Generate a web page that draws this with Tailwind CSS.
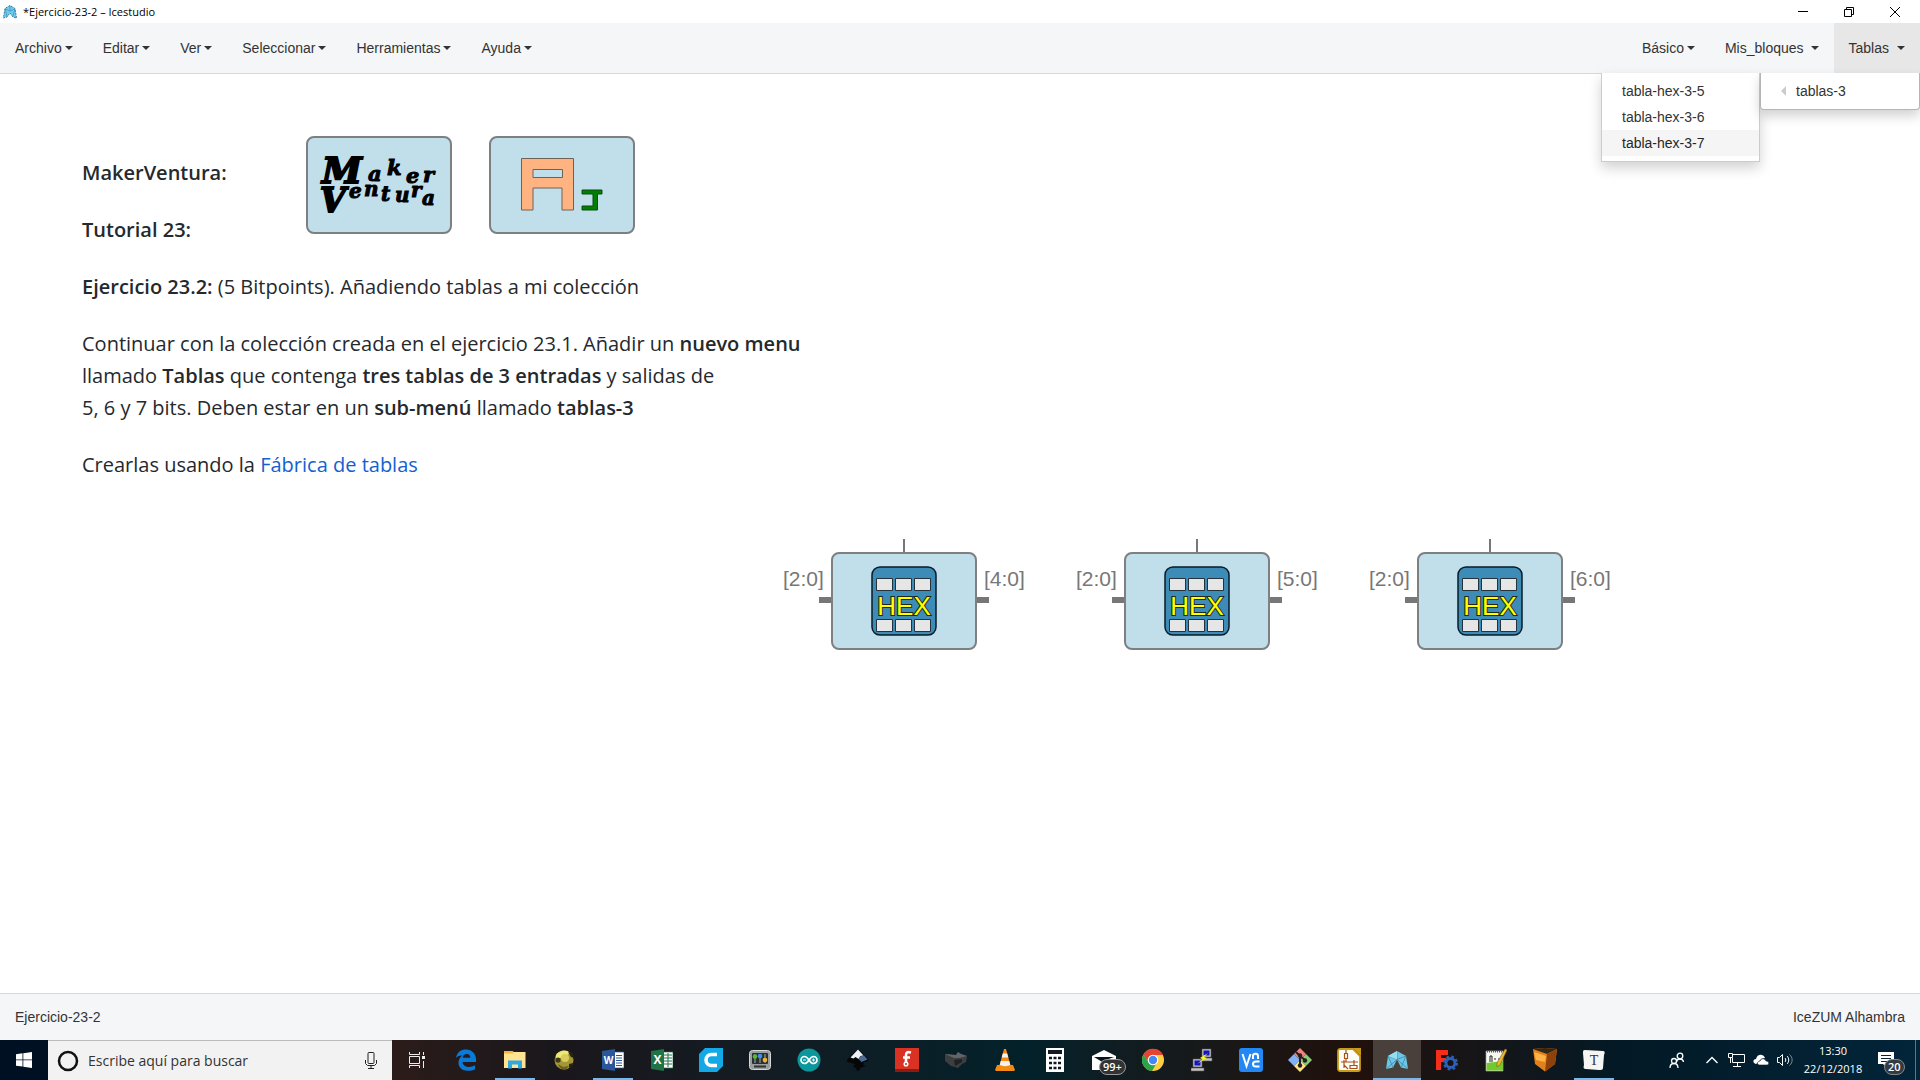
<!DOCTYPE html>
<html lang="es">
<head>
<meta charset="utf-8">
<title>*Ejercicio-23-2 – Icestudio</title>
<script src="https://cdn.jsdelivr.net/npm/@tailwindcss/browser@4"></script>
</head>
<body class="flex h-screen flex-col overflow-hidden bg-white font-['Liberation_Sans',Arial,sans-serif] text-sm text-[#333]">

<!-- Window title bar -->
<header class="flex h-[23px] shrink-0 items-center bg-white pl-[3px] pr-[2px] font-['Open_Sans',sans-serif] text-[11px] text-black">
  <svg class="h-[14px] w-[14px]" viewBox="0 0 14 14"><path d="M7 .500 2 3.500.500 13 4 12 7 8l3 4 3.500 1L12 3.500z" fill="#6ccbf0" stroke="#3a7b98" stroke-width="1" stroke-dasharray="2 1"/><path d="M2 4l5 2 5-2M7 1v5M4 11 2 4m8 7 2-7" stroke="#3f8fb0" fill="none" stroke-width=".7"/></svg>
  <h1 class="ml-[6px] grow">*Ejercicio-23-2 – Icestudio</h1>
  <div class="flex h-full">
    <button class="flex w-[46px] items-center justify-center" aria-label="Minimizar"><svg width="12" height="12" viewBox="0 0 12 12"><path d="M1 5.500h10" stroke="#000"/></svg></button>
    <button class="flex w-[46px] items-center justify-center" aria-label="Restaurar"><svg width="12" height="12" viewBox="0 0 12 12" fill="none" stroke="#000"><path d="M1.500 3.500h7v7h-7zM3.500 3.500v-2h7v7h-2"/></svg></button>
    <button class="flex w-[46px] items-center justify-center" aria-label="Cerrar"><svg width="12" height="12" viewBox="0 0 12 12"><path d="M1 1l10 10M11 1 1 11" stroke="#000"/></svg></button>
  </div>
</header>

<!-- Menu bar -->
<nav class="relative z-10 flex h-[51px] shrink-0 justify-between border-b border-[#d5d8dc] bg-[#f5f6f8]">
  <div class="flex">
    <button class="flex items-center gap-[3px] px-[15px]">Archivo<span class="border-x-4 border-t-4 border-x-transparent border-t-[#333]"></span></button>
    <button class="flex items-center gap-[3px] px-[15px]">Editar<span class="border-x-4 border-t-4 border-x-transparent border-t-[#333]"></span></button>
    <button class="flex items-center gap-[3px] px-[15px]">Ver<span class="border-x-4 border-t-4 border-x-transparent border-t-[#333]"></span></button>
    <button class="flex items-center gap-[3px] px-[15px]">Seleccionar<span class="border-x-4 border-t-4 border-x-transparent border-t-[#333]"></span></button>
    <button class="flex items-center gap-[3px] px-[15px]">Herramientas<span class="border-x-4 border-t-4 border-x-transparent border-t-[#333]"></span></button>
    <button class="flex items-center gap-[3px] px-[15px]">Ayuda<span class="border-x-4 border-t-4 border-x-transparent border-t-[#333]"></span></button>
  </div>
  <div class="flex">
    <button class="flex items-center gap-[3px] px-[15px]">Básico<span class="border-x-4 border-t-4 border-x-transparent border-t-[#333]"></span></button>
    <button class="flex items-center gap-[7px] px-[15px]">Mis_bloques<span class="border-x-4 border-t-4 border-x-transparent border-t-[#333]"></span></button>
    <button class="flex items-center gap-2 bg-[#e7e7e7] px-[15px]">Tablas<span class="border-x-4 border-t-4 border-x-transparent border-t-[#333]"></span></button>
  </div>
  <div class="absolute right-0 top-full flex items-start leading-[26px]">
    <ul class="w-[159px] border border-t-0 border-[#ccc] bg-white py-[5px] shadow-[0_6px_12px_rgba(0,0,0,0.18)]">
      <li><a href="#" class="block px-5">tabla-hex-3-5</a></li>
      <li><a href="#" class="block px-5">tabla-hex-3-6</a></li>
      <li><a href="#" class="block bg-[#f5f5f5] px-5 text-[#262626]">tabla-hex-3-7</a></li>
    </ul>
    <ul class="w-40 rounded-b border border-t-0 border-[#b5b5b5] bg-white py-[5px] shadow-[0_6px_12px_rgba(0,0,0,0.18)]">
      <li><a href="#" class="flex items-center gap-[10px] pl-5"><span class="border-y-[5px] border-r-[5px] border-y-transparent border-r-[#ccc]"></span>tablas-3</a></li>
    </ul>
  </div>
</nav>

<!-- Design canvas -->
<main class="relative grow overflow-hidden bg-white">
  <section class="absolute left-[82px] top-[83px] flex flex-col gap-[25px] whitespace-nowrap font-['Open_Sans',sans-serif] text-[20px] leading-8 text-[#24292e]">
    <p class="font-semibold">MakerVentura:</p>
    <p class="font-semibold">Tutorial 23:</p>
    <p><strong class="font-semibold">Ejercicio 23.2:</strong> (5 Bitpoints). Añadiendo tablas a mi colección</p>
    <p>Continuar con la colección creada en el ejercicio 23.1. Añadir un <strong class="font-semibold">nuevo menu</strong><br>llamado <strong class="font-semibold">Tablas</strong> que contenga <strong class="font-semibold">tres tablas de 3 entradas</strong> y salidas de<br>5, 6 y 7 bits. Deben estar en un <strong class="font-semibold">sub-menú</strong> llamado <strong class="font-semibold">tablas-3</strong></p>
    <p>Crearlas usando la <a href="#" class="text-[#1460d2]">Fábrica de tablas</a></p>
  </section>

  <div class="absolute left-[306px] top-[62px] h-[98px] w-[146px] rounded-lg border-2 border-[#7d7f80] bg-[#c0dfeb]">
    <svg class="h-full w-full" viewBox="0 0 142 94" font-family="'DejaVu Serif',serif" font-weight="bold" font-style="italic" fill="#000" stroke="#000">
      <text font-size="21" stroke-width="1" x="14 60 79 98 115" y="45 43 37 45 44"><tspan font-size="36" stroke-width="2">M</tspan>aker</text>
      <text font-size="20" stroke-width="1" x="12 41 56 73 87 103 114" y="74 60 58 63 64 59 67"><tspan font-size="33" stroke-width="2">V</tspan>entura</text>
    </svg>
  </div>
  <div class="absolute left-[489px] top-[62px] h-[98px] w-[146px] rounded-lg border-2 border-[#7d7f80] bg-[#c0dfeb]">
    <svg class="h-full w-full" viewBox="0 0 142 94"><path fill-rule="evenodd" d="M30.500 20.500h52v51.500h-11.500v-22h-29v22h-11.500zM42 31.500v8h29.500v-8z" fill="#ffb380" stroke="#6e6257"/><path d="M91 52h20v4h-4.500v16h-15.500v-4h11v-12h-11z" fill="#008000" stroke="#0d4a16"/></svg>
  </div>

  <div class="absolute left-[783px] top-[465px] flex items-start text-[21px] leading-6 text-[#777]">
    <div class="flex w-12 flex-col items-end gap-[6px] pt-[28px]"><span class="w-full">[2:0]</span><i class="h-[6px] w-[12px] bg-[#777]"></i></div>
    <div class="flex flex-col items-center"><i class="h-[13px] w-[2px] bg-[#777]"></i>
      <div class="flex h-[98px] w-[146px] items-center justify-center rounded-lg border-2 border-[#7d7f80] bg-[#c0dfeb]">
        <svg width="66" height="70" viewBox="0 0 66 70"><rect x="1" y="1" width="64" height="68" rx="8" fill="#3d8bb7" stroke="#071c28" stroke-width="1.500"/><path d="M5.500 12.500h16v12h-16zm19 0h16v12h-16zm19 0h16v12h-16zM5.500 53.500h16v12h-16zm19 0h16v12h-16zm19 0h16v12h-16z" fill="#e6e6e6" stroke="#26323a"/><text x="33" y="49" text-anchor="middle" font-family="Liberation Sans,sans-serif" font-size="26" fill="#ff0" stroke="#202810" stroke-width="2" paint-order="stroke">HEX</text></svg>
      </div>
    </div>
    <div class="flex w-12 flex-col items-start gap-[6px] pt-[28px]"><span class="pl-[7px]">[4:0]</span><i class="h-[6px] w-[12px] bg-[#777]"></i></div>
  </div>
  <div class="absolute left-[1076px] top-[465px] flex items-start text-[21px] leading-6 text-[#777]">
    <div class="flex w-12 flex-col items-end gap-[6px] pt-[28px]"><span class="w-full">[2:0]</span><i class="h-[6px] w-[12px] bg-[#777]"></i></div>
    <div class="flex flex-col items-center"><i class="h-[13px] w-[2px] bg-[#777]"></i>
      <div class="flex h-[98px] w-[146px] items-center justify-center rounded-lg border-2 border-[#7d7f80] bg-[#c0dfeb]">
        <svg width="66" height="70" viewBox="0 0 66 70"><rect x="1" y="1" width="64" height="68" rx="8" fill="#3d8bb7" stroke="#071c28" stroke-width="1.500"/><path d="M5.500 12.500h16v12h-16zm19 0h16v12h-16zm19 0h16v12h-16zM5.500 53.500h16v12h-16zm19 0h16v12h-16zm19 0h16v12h-16z" fill="#e6e6e6" stroke="#26323a"/><text x="33" y="49" text-anchor="middle" font-family="Liberation Sans,sans-serif" font-size="26" fill="#ff0" stroke="#202810" stroke-width="2" paint-order="stroke">HEX</text></svg>
      </div>
    </div>
    <div class="flex w-12 flex-col items-start gap-[6px] pt-[28px]"><span class="pl-[7px]">[5:0]</span><i class="h-[6px] w-[12px] bg-[#777]"></i></div>
  </div>
  <div class="absolute left-[1369px] top-[465px] flex items-start text-[21px] leading-6 text-[#777]">
    <div class="flex w-12 flex-col items-end gap-[6px] pt-[28px]"><span class="w-full">[2:0]</span><i class="h-[6px] w-[12px] bg-[#777]"></i></div>
    <div class="flex flex-col items-center"><i class="h-[13px] w-[2px] bg-[#777]"></i>
      <div class="flex h-[98px] w-[146px] items-center justify-center rounded-lg border-2 border-[#7d7f80] bg-[#c0dfeb]">
        <svg width="66" height="70" viewBox="0 0 66 70"><rect x="1" y="1" width="64" height="68" rx="8" fill="#3d8bb7" stroke="#071c28" stroke-width="1.500"/><path d="M5.500 12.500h16v12h-16zm19 0h16v12h-16zm19 0h16v12h-16zM5.500 53.500h16v12h-16zm19 0h16v12h-16zm19 0h16v12h-16z" fill="#e6e6e6" stroke="#26323a"/><text x="33" y="49" text-anchor="middle" font-family="Liberation Sans,sans-serif" font-size="26" fill="#ff0" stroke="#202810" stroke-width="2" paint-order="stroke">HEX</text></svg>
      </div>
    </div>
    <div class="flex w-12 flex-col items-start gap-[6px] pt-[28px]"><span class="pl-[7px]">[6:0]</span><i class="h-[6px] w-[12px] bg-[#777]"></i></div>
  </div>
</main>

<!-- Status bar -->
<footer class="flex h-[47px] shrink-0 items-center justify-between border-t border-[#d0d7de] bg-[#f5f6f8] px-[15px]">
  <span>Ejercicio-23-2</span><span>IceZUM Alhambra</span>
</footer>

<!-- Desktop taskbar -->
<div class="flex h-10 shrink-0 bg-linear-to-r from-[#001023] from-0% via-[#031925] via-84% to-[#02253a] to-100% font-['Open_Sans',sans-serif] text-white">
  <button class="flex w-12 items-center justify-center" aria-label="Inicio"><svg width="16" height="16" viewBox="0 0 16 16" fill="#fff"><path d="M0 2.200 6.500 1.300v6.200H0zM7.300 1.200 16 0v7.500H7.300zM0 8.300h6.500v6.300L0 13.700zM7.300 8.300H16V16l-8.700-1.200z"/></svg></button>
  <label class="flex w-[344px] items-center border-t border-[#bbb] bg-[#f2f2f2] pl-[9px] pr-[15px] text-[#333]">
    <svg width="22" height="22" viewBox="0 0 22 22"><circle cx="11" cy="11" r="9" fill="none" stroke="#111" stroke-width="2.500"/></svg>
    <input type="text" aria-label="Buscar" placeholder="Escribe aquí para buscar" class="ml-[9px] w-0 grow bg-transparent text-[14px] outline-none placeholder:text-[#333]">
    <svg width="12" height="17" viewBox="0 0 12 17" fill="none" stroke="#222"><rect x="3" y=".5" width="6" height="11" rx="1"/><path d="M.500 8v3.500l2 2h7l2-2V8M6 13.500v3M3 16.500h6"/></svg>
  </label>
  <div class="flex bg-linear-to-r from-[#2b1c19] from-0% via-[#1a171c] via-25% to-[#02212a] to-100%">
    <button class="flex w-[49px] items-center justify-center" aria-label="Vista de tareas"><svg width="18" height="16" viewBox="0 0 18 16" fill="none" stroke="#eee"><path d="M1.500 0v2.500h10V0M1.500 16v-2.500h10V16M1.500 4.500h10v7h-10zM15.500 0v3M15.500 9v7"/><path d="M14 4h3v3h-3z" fill="#eee" stroke="none"/></svg></button>
    <button class="flex w-[49px] items-center justify-center" aria-label="Edge"><svg width="22" height="22" viewBox="0 0 22 22"><path d="M1 9C2 3 6 .5 11 .500 17 .500 21 5 21 10v3H7.500c.3 3.500 3.500 5 6.500 5 2 0 4-.6 6-1.700v4c-2 1-4.500 1.500-7 1.500-6 0-9.500-3.500-9.500-8 0-3.300 1.600-5.800 4-7.200C4 6.500 2 7.500 1 9zM7.700 8.800h7.600C15.300 6.500 14 5 11.800 5 9.500 5 8 6.500 7.700 8.800z" fill="#0a7ad8"/></svg></button>
    <button class="flex w-[49px] flex-col items-center justify-between pt-[10px]" aria-label="Explorador"><svg width="22" height="19" viewBox="0 0 22 19"><path d="M0 1h8l2 1h11.500v16H0z" fill="#ffe392"/><path d="M0 1h8l1.500 2.500H0z" fill="#f0b93a"/><path d="M4 18.500V10.500h14v8h-4v-4H8v4z" fill="#2fa9e0"/></svg><i class="flex h-[2px] w-10 bg-[#76b9ed]"></i></button>
    <button class="flex w-[49px] items-center justify-center" aria-label="OpenSCAD"><svg width="22" height="20" viewBox="0 0 22 20"><circle cx="11" cy="10" r="9.500" fill="#a3953a"/><path d="M3 5C6 0 14-1 17 3l-4 3-6 2-4 3z" fill="#ece873"/><circle cx="12" cy="8" r="4" fill="#d8cd55"/><circle cx="5" cy="10" r="2.600" fill="#3e3a12"/><path d="M5 14l5 3 6-1-3 3.500c-4 .5-7-2-8-5.500z" fill="#6a601f"/><path d="M15 2l5 1 1 5-3-1zM16 14l4-1-1 4-3 1z" fill="#25240f"/></svg></button>
    <button class="flex w-[49px] flex-col items-center justify-between pt-[9px]" aria-label="Word"><svg width="22" height="22" viewBox="0 0 22 22"><path d="M12 3h10v16H12z" fill="#fff" stroke="#2b579a" stroke-width=".7"/><path d="M14 6.500h6M14 9h6M14 11.500h6M14 14h6M14 16.500h6" stroke="#2b579a"/><path d="M0 2 13 0v22L0 20z" fill="#2b579a"/><text x="6.500" y="15" text-anchor="middle" font-size="10" font-weight="700" fill="#fff">W</text></svg><i class="h-[2px] w-10 bg-[#76b9ed]"></i></button>
    <button class="flex w-[49px] items-center justify-center" aria-label="Excel"><svg width="22" height="22" viewBox="0 0 22 22"><path d="M12 3h10v16H12z" fill="#fff" stroke="#217346" stroke-width=".7"/><path d="M13 6h8M13 9h8M13 12h8M13 15h8M17 4v14" stroke="#217346"/><path d="M0 2 13 0v22L0 20z" fill="#217346"/><text x="6.500" y="15" text-anchor="middle" font-size="12" font-weight="700" fill="#fff">X</text></svg></button>
    <button class="flex w-[49px] items-center justify-center" aria-label="Cura"><svg width="24" height="24" viewBox="0 0 24 24"><path d="M6 0h18v18l-6 6H0V6z" fill="#12a9e6"/><path d="M18 6.500h-5.500a5.500 5.500 0 0 0 0 11H18" fill="none" stroke="#fff" stroke-width="3.600"/></svg></button>
    <button class="flex w-[49px] items-center justify-center" aria-label="Panel de control"><svg width="22" height="20" viewBox="0 0 22 20"><rect x=".5" y=".5" width="21" height="19" rx="3" fill="#9a9d9e" stroke="#d5d7d8"/><rect x="3" y="3" width="16" height="11" rx="1" fill="#283034"/><path d="M6 4v9M11 4v9M16 4v9" stroke="#aaa"/><circle cx="6" cy="6.500" r="2.300" fill="#58b92f"/><circle cx="11" cy="6" r="2.300" fill="#3d8fe8"/><circle cx="16" cy="10" r="2.300" fill="#f0b424"/><path d="M5 16.500h12" stroke="#333" stroke-width="2"/></svg></button>
    <button class="flex w-[49px] items-center justify-center" aria-label="Arduino"><svg width="24" height="24" viewBox="0 0 24 24"><circle cx="12" cy="12" r="11.500" fill="#0b979b"/><path d="M12 12C10 9 9 8.500 7.500 8.500a3.500 3.500 0 0 0 0 7C9 15.500 10 15 12 12s3-3.500 4.500-3.500a3.500 3.500 0 0 1 0 7C15 15.500 14 15 12 12z" fill="none" stroke="#fff" stroke-width="1.700"/><path d="M6 12h3M15 12h3M16.500 10.500v3" stroke="#fff"/></svg></button>
    <button class="flex w-[49px] items-center justify-center" aria-label="Inkscape"><svg width="22" height="22" viewBox="0 0 22 22"><path d="M11 0 21 10c1 2-1 3-4 3l-1 3 3 1-6 2 0 2-3 1-1-3-3-1 2-3-7-2c-2-1-1-2 0-3z" fill="#050608"/><path d="M11 .500 3.500 8.500l3 1 2-1.500 3 2 2-3 3-.5z" fill="#eef2f6"/><path d="M14 7l3-.5 3.500 4-6 2.500-3-3z" fill="#4c6c94"/></svg></button>
    <button class="flex w-[49px] items-center justify-center" aria-label="Fritzing"><svg width="24" height="24" viewBox="0 0 24 24"><path d="M0 0h24v24H0z" fill="#d93223"/><path d="M0 21h24v3H0z" fill="#8c1b12"/><path d="M16 4.500c-4-1-5 0-5 3v7M8 9.500h7" fill="none" stroke="#fff" stroke-width="2.600"/><circle cx="11" cy="16" r="1.800" fill="none" stroke="#fff" stroke-width="1.500"/></svg></button>
    <button class="flex w-[49px] items-center justify-center" aria-label="Impresora"><svg width="24" height="18" viewBox="0 0 24 18"><path d="M1 3 12 4l2-3 3 2 6 2-1 6-4 2-4 4-7-2-6-5z" fill="#3c3e40"/><path d="M1 3 12 4l2-3 3 2 6 2-8 2-5 0z" fill="#626568"/><path d="M10 9l8-1v3l-7 4z" fill="#1f2123"/></svg></button>
    <button class="flex w-[49px] items-center justify-center" aria-label="VLC"><svg width="22" height="24" viewBox="0 0 22 24"><path d="M3 17h16l2 5-1 1H2l-1-1z" fill="#f28a13"/><path d="M10 1h2l5 18c-3 2-9 2-12 0z" fill="#f58a12"/><path d="M8.800 5.500h4.400l1.100 4H7.700zM6.800 13h8.400l1 4c-3 1.500-7 1.500-10.400 0z" fill="#f4f2ee"/></svg></button>
  </div>
  <div class="flex bg-linear-to-r from-[#02212a] from-0% via-[#20100b] via-55% to-[#031925] to-100% pl-px">
    <button class="flex w-[49px] items-center justify-center" aria-label="Calculadora"><svg width="18" height="24" viewBox="0 0 18 24"><path d="M0 0h18v24H0z" fill="#fff"/><path d="M2 2h14v4H2z" fill="#101820"/><path d="M3 10h12M3 15h12M3 20h12" stroke="#101820" stroke-width="2.500" stroke-dasharray="3 1.500"/></svg></button>
    <button class="relative flex w-[49px] items-center justify-center" aria-label="Correo"><svg width="24" height="20" viewBox="0 0 24 20"><path d="M0 6 12 0l12 6v14H0z" fill="#fff"/><path d="M2 7h20l-8 3-2 3z" fill="#07151c"/></svg><span class="absolute left-[20px] top-[19px] rounded-full border border-[#999] bg-[#333] px-[3px] text-[11px] font-semibold leading-[14px]">99+</span></button>
    <button class="flex w-[49px] items-center justify-center" aria-label="Chrome"><svg width="24" height="24" viewBox="0 0 24 24"><circle cx="12" cy="12" r="11" fill="#ffcd40"/><path d="M2.500 6.500A11 11 0 0 1 22 7H12l-4.500 7z" fill="#e5432f"/><path d="M2.500 6.500A11 11 0 0 0 11 23l5-8.500-8.500-.5z" fill="#2ba24c"/><circle cx="12" cy="12" r="5.300" fill="#fff"/><circle cx="12" cy="12" r="4.200" fill="#4688f1"/></svg></button>
    <button class="flex w-[49px] items-center justify-center" aria-label="PuTTY"><svg width="22" height="24" viewBox="0 0 22 24"><path d="M11 1h9v8h-9zM10 10h11v3H10zM2 11h9v8H2zM0 20h13v3H0z" fill="#c4c4c4" stroke="#555" stroke-width=".6"/><path d="M12.500 2.500h6v5h-6zM3.500 12.500h6v5h-6z" fill="#1212c8"/><path d="m17 5-8 5 3 1-6 5 10-6-3-1z" fill="#ff0"/></svg></button>
    <button class="flex w-[49px] items-center justify-center" aria-label="VNC"><svg width="24" height="24" viewBox="0 0 24 24" fill="none" stroke="#fff" stroke-width="2"><rect width="24" height="24" rx="3" fill="#2388f3" stroke="none"/><path d="m3.500 6 4 12 4-12M14 11V8c0-3 5-3 5 0v3M20.500 13.500H17c-4 0-4 5 0 5h3.500"/></svg></button>
    <button class="flex w-[49px] items-center justify-center" aria-label="Git"><svg width="24" height="24" viewBox="0 0 24 24"><path d="m12 0 6 6-6 6-6-6z" fill="#f0837e"/><path d="m6 6 6 6-6 6-6-6z" fill="#82b1f5"/><path d="m18 6 6 6-6 6-6-6z" fill="#8ccb75"/><path d="m12 12 6 6-6 6-6-6z" fill="#ffe588"/><path d="M8 4l4 4v9m0-9 5 4" fill="none" stroke="#222" stroke-width="2"/><circle cx="12" cy="7.500" r="2.200" fill="#222"/><circle cx="17" cy="12.500" r="2.200" fill="#222"/><circle cx="12" cy="17.500" r="2.200" fill="#222"/></svg></button>
    <button class="flex w-[49px] items-center justify-center" aria-label="LibreOffice Draw"><svg width="24" height="24" viewBox="0 0 24 24"><path d="M3 1h13l7 7v13a2 2 0 0 1-2 2H3a2 2 0 0 1-2-2V3a2 2 0 0 1 2-2z" fill="#fffdf8" stroke="#c99a18" stroke-width="1.800"/><path d="M16 0h8v8z" fill="#c99a18"/><path d="M9 2v3M7.500 5.500h3v5h-3zM9 11v3h12M4 14h5M7 12v8M7 17l4 4M13 17.500h7v3h-7zM17 12v5" fill="none" stroke="#a8501c" stroke-width="1.200"/></svg></button>
    <button class="flex w-12 flex-col items-center justify-between bg-[#4a403b] pt-[11px]" aria-label="Icestudio"><svg width="22" height="19" viewBox="0 0 22 19"><path d="M11 0 2 5 0 18l7-1.500 4-8 4 8 7 1.500-2-13z" fill="#6cc7e6"/><path d="m2 5 5 11.500M2 5l9 3.500L20 5l-5 11.500M11 0v8.500M0 18l11-9.500L22 18" stroke="#3f86a3" fill="none" stroke-width=".8"/><path d="m11 0-9 5 9 3.500z" fill="#98dcf0"/></svg><i class="h-[2px] w-full bg-[#76b9ed]"></i></button>
    <button class="ml-px flex w-[49px] items-center justify-center" aria-label="FreeCAD"><svg width="22" height="22" viewBox="0 0 22 22"><path d="M0 1h12v5H5v3h5v4H5v8H0z" fill="#f42e18"/><circle cx="14.500" cy="14" r="4.500" fill="none" stroke="#2c5fb8" stroke-width="3"/><circle cx="14.500" cy="14" r="6.500" fill="none" stroke="#2c5fb8" stroke-width="2" stroke-dasharray="2.700 2.400"/></svg></button>
    <button class="flex w-[49px] items-center justify-center" aria-label="Notepad++"><svg width="22" height="24" viewBox="0 0 22 24"><path d="M1 3h17v20H1z" fill="#f8f8f3" stroke="#999" stroke-width=".7"/><path d="M1.500 15 18 13v9.500H1.500z" fill="#73c92d"/><path d="M2 3.500h15" stroke="#555" stroke-width="2" stroke-dasharray="1 1"/><path d="M5 8v6M5 8h2v6M9 11h2M13 11h2" stroke="#222" fill="none"/><path d="m20 1 2 1-7 15-3 2v-4z" fill="#eeb632" stroke="#7d5c18" stroke-width=".6"/></svg></button>
    <button class="flex w-[49px] items-center justify-center" aria-label="Paquete"><svg width="24" height="24" viewBox="0 0 24 24"><path d="M0 1 12 0l12 1-2 15-10 7.500L2 16z" fill="#e0811b"/><path d="M0 1 12 0l12 1-10 5z" fill="#332518"/><path d="M14 6 24 1l-2 15-10 7.500z" fill="#8e4209"/><path d="m1 4 12 4-1 6-9-2z" fill="#ffb347"/></svg></button>
    <button class="flex w-[49px] flex-col items-center justify-between pt-[9px]" aria-label="Typora"><svg width="22" height="22" viewBox="0 0 22 22"><path d="m2 1 18 1c2 0 2 2 1 4l-1 13c0 2-2 2-4 2L3 20c-2 0-3-1-2-4L0 4c0-2 0-3 2-3z" fill="#f5f5f4"/><text x="11" y="16" text-anchor="middle" font-family="Liberation Serif,serif" font-size="14" fill="#333">T</text></svg><i class="h-[2px] w-10 bg-[#76b9ed]"></i></button>
  </div>
  <div class="ml-auto flex items-center">
    <button aria-label="Contactos"><svg width="16" height="17" viewBox="0 0 16 17" fill="none" stroke="#fff" stroke-width="1.300"><circle cx="11" cy="4" r="2.800"/><path d="M7.500 10c.5-4 6.500-4 7 0"/><circle cx="5" cy="9" r="2.500"/><path d="M1 16c0-6 8-6 8 0"/></svg></button>
    <button class="ml-[21px]" aria-label="Iconos ocultos"><svg width="12" height="8" viewBox="0 0 12 8"><path d="m.5 7 5.500-5.500L11.500 7" fill="none" stroke="#fff" stroke-width="1.400"/></svg></button>
    <button class="ml-[10px]" aria-label="Red"><svg width="17" height="14" viewBox="0 0 17 14" fill="none" stroke="#fff"><path d="M5 1.500h11.500v8H4.500V5M9.500 10v3M5 13.500h8M2.500 5v5"/><path d="M.500.500h4v4h-4z"/></svg></button>
    <button class="ml-[8px]" aria-label="OneDrive"><svg width="16" height="12" viewBox="0 0 16 12"><path d="M3 10C-1 9 0 5 3 5c1-5 7-6 9-1L8 5 6 8z" fill="#fff"/><path d="M6 11C3 10 5 7 7 7c1-3 5-3 6 0 4 0 3 4 1 4z" fill="#fff" stroke="#021e30" stroke-width=".6"/></svg></button>
    <button class="ml-[8px]" aria-label="Volumen"><svg width="17" height="14" viewBox="0 0 17 14" fill="none" stroke="#fff"><path d="M.500 4.500h2l3-3v11l-3-3h-2zM8 5c1 1 1 3 0 4M10 3c2.300 2 2.300 6 0 8"/><path d="M12.500 1.500c3.500 3 3.500 8 0 11" stroke="#7c8d99"/></svg></button>
    <time class="ml-[8px] w-[62px] text-center text-[11px] leading-[18px]">13:30<br>22/12/2018</time>
    <button class="relative ml-[14px] h-10 w-[37px]" aria-label="Notificaciones"><svg class="absolute left-0 top-[12px]" width="16" height="15" viewBox="0 0 16 15"><path d="M0 0h16v12H8v3l-3-3H0z" fill="#fff"/><path d="M3 3.500h10M3 6.500h10M3 9.500h6" stroke="#022236"/></svg><span class="absolute left-[6px] top-[19px] rounded-full border border-[#888] bg-[#333b42] px-[3px] text-[11px] font-semibold leading-[14px]">20</span></button>
    <i class="mr-1 h-10 w-px bg-[#647581]"></i>
  </div>
</div>
</body>
</html>
